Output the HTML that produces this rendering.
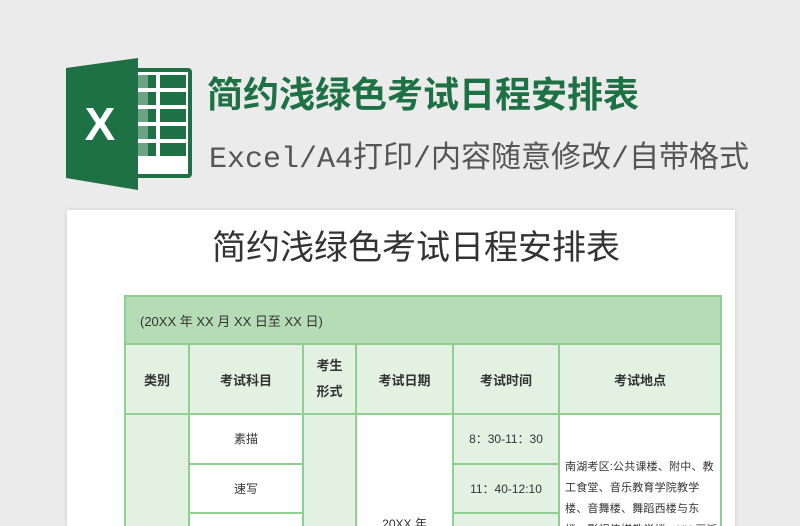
<!DOCTYPE html>
<html style="overflow:hidden;width:800px;height:526px"><head><meta charset="utf-8"><style>
body{margin:0;width:800px;height:526px;background:#ebebeb;overflow:hidden;position:relative;font-family:"Liberation Sans","Noto Sans CJK SC",sans-serif}
.t1{position:absolute;left:207px;top:66px;font-size:36px;font-weight:bold;color:#1e7145;white-space:nowrap}
.t2{position:absolute;left:209px;top:132px;font-size:30px;color:#555;white-space:nowrap;font-family:"Liberation Mono","Noto Sans CJK SC",monospace}
.paper{position:absolute;left:67px;top:210px;width:668px;height:316px;background:#fff;box-shadow:0 0 4px rgba(0,0,0,.15)}
.t3{position:absolute;left:212px;top:220px;font-size:34px;color:#333;white-space:nowrap}
.wrap{position:absolute;left:0;top:0;width:800px;height:526px;overflow:hidden}
table{position:absolute;left:124px;top:295px;border-collapse:collapse;width:596px;table-layout:fixed}
td{border:2px solid #8fcf8f;text-align:center;font-size:12px;color:#333;padding:0}
.h td{background:#e2f1e2;font-weight:bold;font-size:13px}
</style></head><body><div class="wrap">
<svg style="position:absolute;left:66px;top:58px" width="128" height="132" viewBox="0 0 128 132">
<rect x="60" y="10" width="66" height="110" rx="4" fill="#1e7145"/>
<rect x="64" y="14" width="58" height="102" fill="#fff"/>
<g fill="#1e7145">
<rect x="62" y="17" width="28" height="13"/><rect x="94" y="17" width="26" height="13"/>
<rect x="62" y="34" width="28" height="13"/><rect x="94" y="34" width="26" height="13"/>
<rect x="62" y="51" width="28" height="13"/><rect x="94" y="51" width="26" height="13"/>
<rect x="62" y="68" width="28" height="13"/><rect x="94" y="68" width="26" height="13"/>
<rect x="62" y="85" width="28" height="13"/><rect x="94" y="85" width="26" height="13"/>
</g>
<rect x="70" y="14" width="12" height="102" fill="#fff" opacity=".35"/>
<polygon points="0,10 72,0 72,132 0,120" fill="#1e7145"/>
<text x="34" y="82" font-size="46" font-weight="bold" fill="#fff" text-anchor="middle" font-family="Liberation Sans">X</text>
</svg>
<div class="t1">简约浅绿色考试日程安排表</div>
<div class="t2">Excel/A4打印/内容随意修改/自带格式</div>
<div class="paper"></div>
<div class="t3">简约浅绿色考试日程安排表</div>
<table>
<colgroup><col style="width:64px"><col style="width:114px"><col style="width:53px"><col style="width:97px"><col style="width:106px"><col style="width:162px"></colgroup>
<tr><td colspan="6" style="background:#b5dcb5;height:46px;text-align:left;padding-left:14px;font-size:13px">(20XX 年 XX 月 XX 日至 XX 日)</td></tr>
<tr class="h" style="height:70px"><td>类别</td><td>考试科目</td><td style="line-height:26px">考生<br>形式</td><td>考试日期</td><td>考试时间</td><td>考试地点</td></tr>
<tr style="height:48px"><td rowspan="3" style="background:#e2f1e2"></td><td>素描</td><td rowspan="3" style="background:#e2f1e2"></td><td rowspan="3" style="vertical-align:top;padding-top:100px">20XX 年</td><td style="background:#e2f1e2">8：30-11：30</td><td rowspan="3" style="text-align:left;vertical-align:top;padding:42px 0 0 5px;font-size:11px;letter-spacing:0.2px;line-height:21px">南湖考区:公共课楼、附中、教工食堂、音乐教育学院教学楼、音舞楼、舞蹈西楼与东楼、影视传媒教学楼、XX 画派艺术中</td></tr>
<tr style="height:48px"><td>速写</td><td style="background:#e2f1e2">11：40-12:10</td></tr>
<tr style="height:48px"><td></td><td style="background:#e2f1e2"></td></tr>
</table>
</div></body></html>
